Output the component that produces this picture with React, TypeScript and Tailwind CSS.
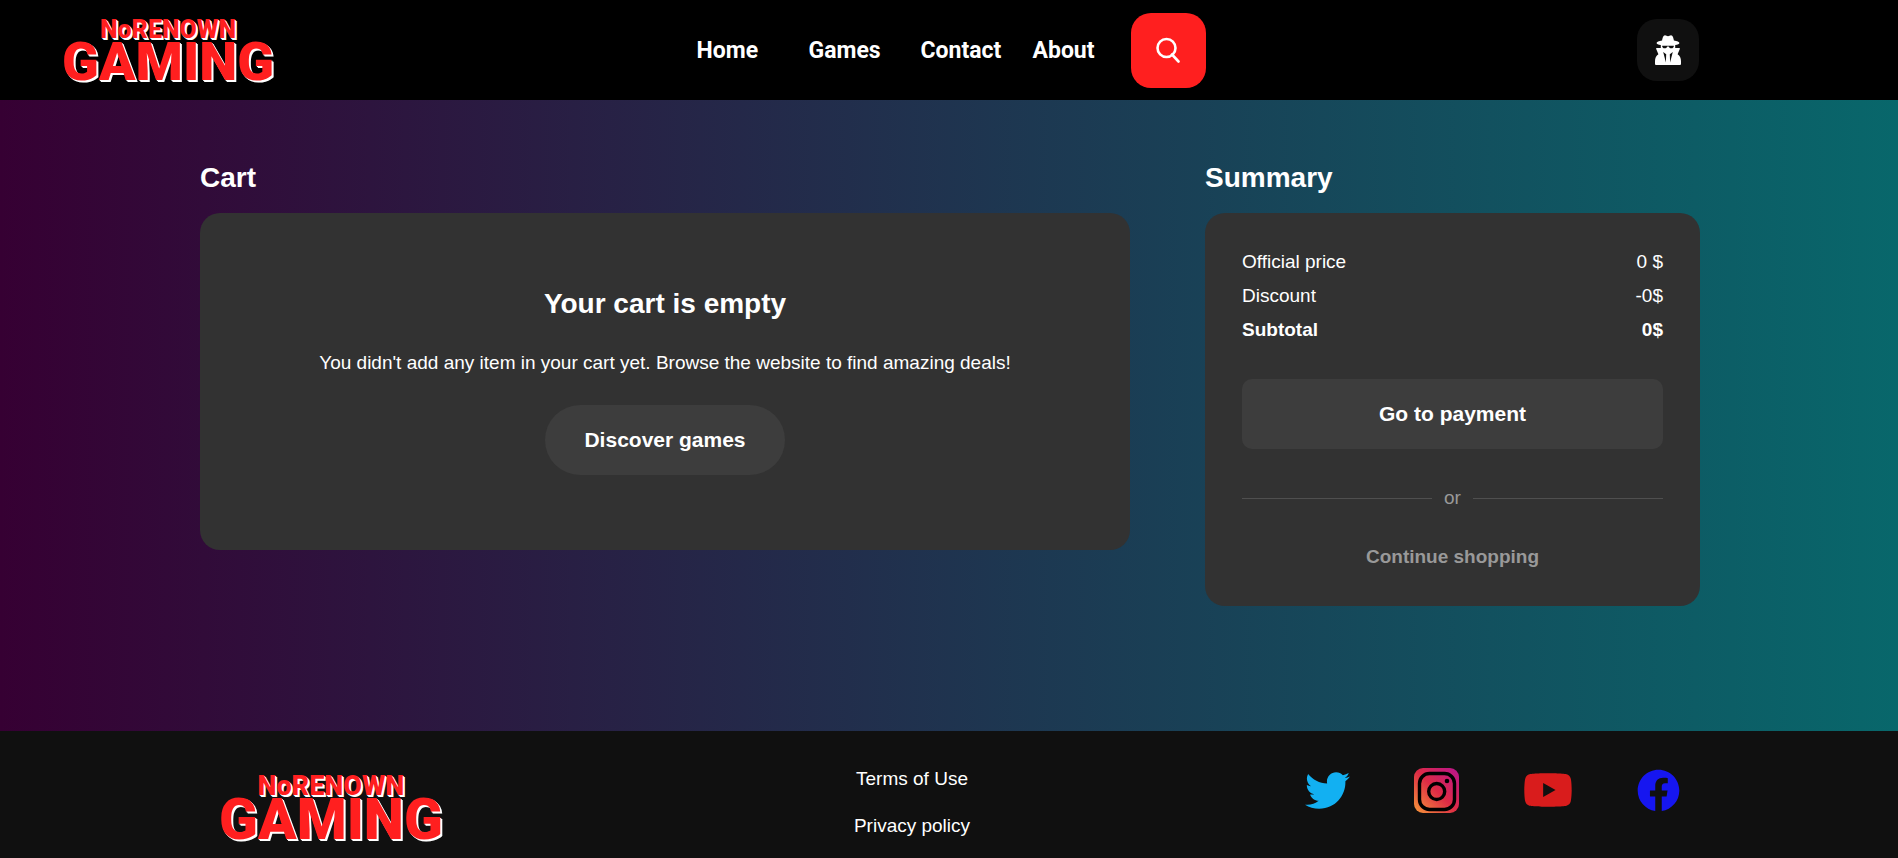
import { FaFacebook, FaTwitter, FaYoutube } from "react-icons/fa";

const navItems = ["Home", "Games", "Contact", "About"];

const priceRows = [
  { label: "Official price", value: "0 $", weight: "font-normal" },
  { label: "Discount", value: "-0$", weight: "font-normal" },
  { label: "Subtotal", value: "0$", weight: "font-bold" },
];

function Logo({ large = false }: { large?: boolean }) {
  return (
    <a
      href="#"
      className="flex flex-col items-center font-['Roboto','Liberation_Sans',sans-serif] font-black text-[#ff1f1f] [text-shadow:1px_1px_0_#fff,2px_2px_0_#fff]"
    >
      <span className={large ? "text-[27px] leading-6" : "text-[25px] leading-[22px]"}>
        NoRENOWN
      </span>
      <span className={large ? "text-[57px] leading-[44px]" : "text-[54px] leading-[42px]"}>
        GAMING
      </span>
    </a>
  );
}

function SpyIcon() {
  return (
    <svg viewBox="0 0 26 30" className="h-[30px] w-[26px]" aria-hidden="true">
      <path
        fill="#fff"
        d="M10 .3C11 .3 12 1.2 13 1.2S15 .3 16 .3c1.700 0 2.500 2.900 2.900 5.100 3.300.6 5.500 1.500 5.500 2.500 0 .9-1.700 1.600-4.200 2.100v3h4c.5 0 .8.4.6.9l-2.200 5.300C24.800 20.500 26 23.200 26 26v2.700c0 .8-.5 1.300-1.300 1.300H1.300C.5 30 0 29.500 0 28.700V26c0-2.800 1.200-5.500 3.400-6.800L1.200 13.900c-.2-.5.100-.9.600-.9h4v-3C3.300 9.500 1.600 8.800 1.600 7.900c0-1 2.200-1.900 5.500-2.500C7.500 3.200 8.300.3 10 .3z"
      />
      <path
        fill="#101010"
        d="M7.200 10.700h11.600v.8c-.4 1.400-1 1.700-2.300 1.700-1.500 0-2.200-.5-2.800-1.800h-1.400c-.6 1.300-1.300 1.800-2.800 1.800-1.300 0-1.900-.3-2.300-1.700zM8.200 17l3 2.300-.3 8.200zM17.800 17l-3 2.300.3 8.200z"
      />
    </svg>
  );
}

function InstagramIcon() {
  return (
    <svg viewBox="0 0 45 45" className="size-[45px]" aria-hidden="true">
      <defs>
        <linearGradient id="insta" x1="0" y1="1" x2="1" y2="0">
          <stop offset="0" stopColor="#f7983a" />
          <stop offset="0.5" stopColor="#dd2a45" />
          <stop offset="1" stopColor="#b9148f" />
        </linearGradient>
      </defs>
      <rect width="45" height="45" rx="9" fill="url(#insta)" />
      <rect x="5.500" y="5.500" width="35" height="36" rx="10" fill="none" stroke="#000" strokeWidth="3.400" />
      <circle cx="22.700" cy="23.500" r="8" fill="none" stroke="#000" strokeWidth="3.400" />
      <circle cx="33" cy="13" r="2.300" fill="#000" />
    </svg>
  );
}

function Header() {
  return (
    <header className="grid h-[100px] grid-cols-[1fr_auto_1fr] items-center bg-black">
      <div className="flex pt-0.5 pl-[62px]">
        <Logo />
      </div>
      <nav className="flex items-center pl-1 font-['Roboto','Liberation_Sans',sans-serif] text-[23px] font-bold text-white">
        {navItems.map((item) => (
          <a key={item} href="#" className="w-28 pt-0.5 last-of-type:w-[98px]">
            {item}
          </a>
        ))}
        <button
          type="button"
          aria-label="Search"
          className="flex size-[75px] items-center justify-center rounded-[20px] bg-[#ff1f1f]"
        >
          <svg viewBox="0 0 24 26" className="h-[26px] w-6" fill="none" stroke="#fff" strokeWidth="2.600" aria-hidden="true">
            <circle cx="10.500" cy="11" r="9" />
            <path d="M16 17.500 L22.500 24.500" strokeLinecap="round" />
          </svg>
        </button>
      </nav>
      <div className="flex justify-end pr-[199px]">
        <button
          type="button"
          aria-label="Account"
          className="flex size-[62px] items-center justify-center rounded-[20px] bg-[#101010]"
        >
          <SpyIcon />
        </button>
      </div>
    </header>
  );
}

function Cart() {
  return (
    <section>
      <h2 className="text-[28px] leading-8 font-bold">Cart</h2>
      <div className="mt-[19px] flex flex-col items-center rounded-[20px] bg-[#323232] pt-[75px] pb-[75px]">
        <h3 className="text-[28px] leading-8 font-bold">Your cart is empty</h3>
        <p className="mt-[31px] text-[19px] leading-6">
          You didn't add any item in your cart yet. Browse the website to find amazing deals!
        </p>
        <a
          href="#"
          className="mt-[30px] flex h-[70px] w-60 items-center justify-center rounded-full bg-[#3d3d3d] text-[21px] font-bold"
        >
          Discover games
        </a>
      </div>
    </section>
  );
}

function Summary() {
  return (
    <section>
      <h2 className="text-[28px] leading-8 font-bold">Summary</h2>
      <div className="mt-[19px] rounded-[20px] bg-[#323232] px-[37px] pt-8 pb-[37px]">
        <dl className="text-[19px] leading-[34px]">
          {priceRows.map((row) => (
            <div key={row.label} className={"flex justify-between " + row.weight}>
              <dt>{row.label}</dt>
              <dd>{row.value}</dd>
            </div>
          ))}
        </dl>
        <button
          type="button"
          className="mt-8 h-[70px] w-full rounded-[10px] bg-[#3d3d3d] text-[21px] font-bold"
        >
          Go to payment
        </button>
        <div className="mt-[37px] flex items-center gap-3 text-[19px] leading-6 text-[#999]">
          <span className="h-px flex-1 bg-[#4f4f4f]" />
          or
          <span className="h-px flex-1 bg-[#4f4f4f]" />
        </div>
        <a href="#" className="mt-[35px] block text-center text-[19px] leading-6 font-bold text-[#999]">
          Continue shopping
        </a>
      </div>
    </section>
  );
}

function Footer() {
  return (
    <footer>
      <div className="mx-auto grid max-w-[1500px] grid-cols-[1fr_auto_1fr] items-start pb-6">
        <div className="flex pt-[43px] pl-5">
          <Logo large />
        </div>
        <div className="flex flex-col items-center gap-[23px] pt-9 pr-[74px] text-[19px] leading-6">
          <a href="#">Terms of Use</a>
          <a href="#">Privacy policy</a>
        </div>
        <div className="flex items-center justify-end gap-16 pt-[34px] pr-[19px]">
          <a href="#" aria-label="Twitter">
            <FaTwitter className="size-[45px] text-[#12b0f2]" />
          </a>
          <a href="#" aria-label="Instagram">
            <InstagramIcon />
          </a>
          <a href="#" aria-label="YouTube">
            <FaYoutube className="size-[50px] text-[#d91c1c]" />
          </a>
          <a href="#" aria-label="Facebook">
            <FaFacebook className="size-[43px] text-[#1616f0]" />
          </a>
        </div>
      </div>
    </footer>
  );
}

export default function App() {
  return (
    <div className="flex min-h-screen flex-col bg-[#101010] font-['Liberation_Sans',Arial,sans-serif] text-white">
      <Header />
      <main className="bg-[linear-gradient(90deg,#360033,#08676b)] pt-[62px] pb-[125px] pl-0.5">
        <div className="mx-auto grid max-w-[1500px] grid-cols-[minmax(0,1fr)_33%] items-start gap-[75px]">
          <Cart />
          <Summary />
        </div>
      </main>
      <Footer />
    </div>
  );
}
